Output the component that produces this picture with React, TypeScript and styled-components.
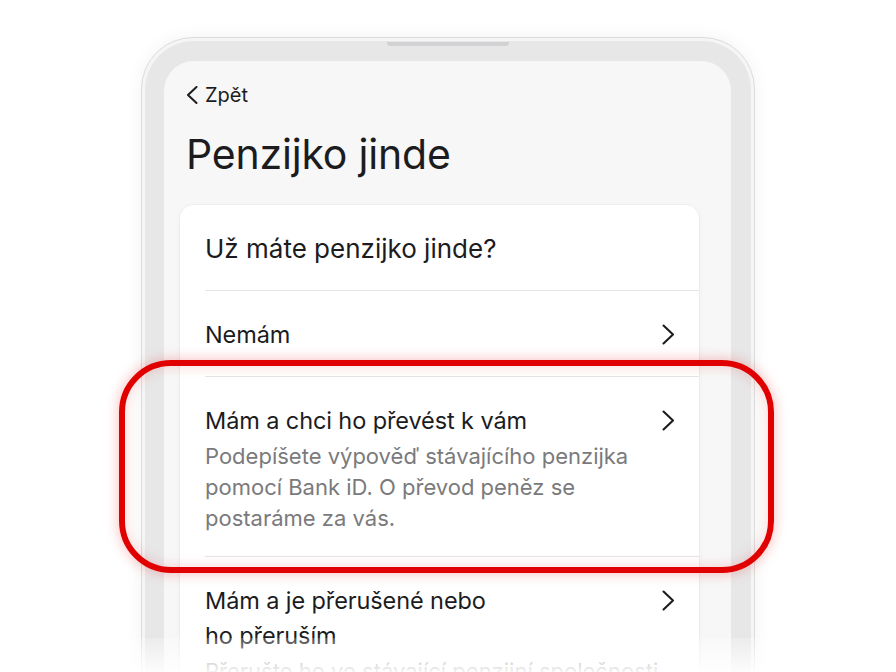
import React from "react";
import styled, { createGlobalStyle } from "styled-components";

const GlobalStyle = createGlobalStyle`
  html, body {
    margin: 0;
    padding: 0;
    background: #ffffff;
  }
  body {
    font-family: Inter, "Noto Sans", "Liberation Sans", sans-serif;
    color: #1c1c1e;
    -webkit-font-smoothing: antialiased;
  }
`;

const Page = styled.div`
  position: relative;
  width: 896px;
  height: 672px;
  overflow: hidden;
  background: #ffffff;
`;

const PhoneShell = styled.div`
  width: 614px;
  height: 760px;
  margin: 37px auto 0;
  box-sizing: border-box;
  border: 1px solid #dcdcdc;
  border-radius: 52px;
  background: #f5f5f5;
  padding: 3px;
  box-shadow: 0 0 18px rgba(0, 0, 0, 0.05);
  position: relative;
`;

const Bezel = styled.div`
  height: 100%;
  box-sizing: border-box;
  border-radius: 49px;
  background: #e7e7e8;
  padding: 20px 20px 0 19px;
`;

const Notch = styled.div`
  position: absolute;
  top: 4px;
  left: 50%;
  transform: translateX(-50%);
  width: 122px;
  height: 4px;
  border-radius: 0 0 3px 3px;
  background: #d2d2d4;
`;

const Screen = styled.div`
  height: 100%;
  border-radius: 30px 30px 0 0;
  background: #f7f7f7;
  padding: 20px 32px 0 16px;
  box-sizing: border-box;
`;

const Header = styled.div`
  padding-left: 6px;
  display: flex;
  flex-direction: column;
`;

const BackLink = styled.div`
  display: flex;
  align-items: center;
  gap: 7px;
  font-size: 20px;
  line-height: 28px;
  color: #1c1c1e;
`;

const Title = styled.h1`
  margin: 21px 0 0;
  font-size: 41px;
  line-height: 48px;
  font-weight: 400;
  letter-spacing: -0.2px;
  color: #1c1c1e;
`;

const Card = styled.div`
  margin-top: 27px;
  background: #ffffff;
  border-radius: 14px;
  box-shadow: 0 0 0 1px rgba(0, 0, 0, 0.025), 0 1px 6px rgba(0, 0, 0, 0.04);
  padding-left: 25px;
`;

const CardHeading = styled.div`
  padding: 27px 24px 24px 0;
  font-size: 26px;
  line-height: 34px;
  color: #1c1c1e;
`;

const Row = styled.div<{ $tall?: boolean }>`
  display: flex;
  align-items: flex-start;
  justify-content: space-between;
  border-top: 1px solid #e4e4e4;
  padding: 26px 24px ${(p) => (p.$tall ? "22px" : "24px")} 0;
`;

const RowText = styled.div`
  display: flex;
  flex-direction: column;
  gap: 3px;
`;

const RowTitle = styled.div`
  font-size: 23.5px;
  line-height: 35px;
  letter-spacing: -0.1px;
  color: #1c1c1e;
`;

const RowDesc = styled.div`
  font-size: 22px;
  line-height: 31px;
  color: #7a7a7c;
`;

const ChevronBox = styled.div`
  width: 14px;
  height: 35px;
  display: flex;
  align-items: center;
  justify-content: center;
  flex-shrink: 0;
`;

const Highlight = styled.div`
  position: absolute;
  left: 119px;
  top: 360px;
  width: 655px;
  height: 213px;
  box-sizing: border-box;
  border: 6px solid #e10000;
  border-radius: 52px;
  box-shadow: 0 0 14px rgba(230, 0, 0, 0.28), inset 0 0 14px rgba(230, 0, 0, 0.18);
  pointer-events: none;
`;

const BottomFade = styled.div`
  position: absolute;
  left: 0;
  right: 0;
  bottom: 0;
  height: 34px;
  background: linear-gradient(to bottom, rgba(255, 255, 255, 0.2), rgba(255, 255, 255, 0.9));
  pointer-events: none;
`;

const ChevronRight = () => (
  <svg width="13" height="21" viewBox="0 0 13 21" fill="none">
    <polyline
      points="1.5,1.5 11,10.5 1.5,19.5"
      stroke="#1c1c1e"
      strokeWidth="2.1"
      strokeLinecap="round"
      strokeLinejoin="round"
    />
  </svg>
);

const ChevronLeft = () => (
  <svg width="12" height="18" viewBox="0 0 12 18" fill="none">
    <polyline
      points="10.5,1 2,9 10.5,17"
      stroke="#1c1c1e"
      strokeWidth="2"
      strokeLinecap="round"
      strokeLinejoin="round"
    />
  </svg>
);

type Option = {
  title: React.ReactNode;
  desc?: React.ReactNode;
};

const options: Option[] = [
  { title: "Nemám" },
  {
    title: "Mám a chci ho převést k vám",
    desc: (
      <>
        Podepíšete výpověď stávajícího penzijka
        <br />
        pomocí Bank iD. O převod peněz se
        <br />
        postaráme za vás.
      </>
    ),
  },
  {
    title: (
      <>
        Mám a je přerušené nebo
        <br />
        ho přeruším
      </>
    ),
    desc: <>Přerušte ho ve stávající penzijní společnosti</>,
  },
];

export default function App() {
  return (
    <>
      <GlobalStyle />
      <Page>
        <PhoneShell>
          <Notch />
          <Bezel>
            <Screen>
              <Header>
                <BackLink>
                  <ChevronLeft />
                  Zpět
                </BackLink>
                <Title>Penzijko jinde</Title>
              </Header>
              <Card>
                <CardHeading>Už máte penzijko jinde?</CardHeading>
                {options.map((o, i) => (
                  <Row key={i} $tall={!!o.desc}>
                    <RowText>
                      <RowTitle>{o.title}</RowTitle>
                      {o.desc && <RowDesc>{o.desc}</RowDesc>}
                    </RowText>
                    <ChevronBox>
                      <ChevronRight />
                    </ChevronBox>
                  </Row>
                ))}
              </Card>
            </Screen>
          </Bezel>
        </PhoneShell>
        <Highlight />
        <BottomFade />
      </Page>
    </>
  );
}
